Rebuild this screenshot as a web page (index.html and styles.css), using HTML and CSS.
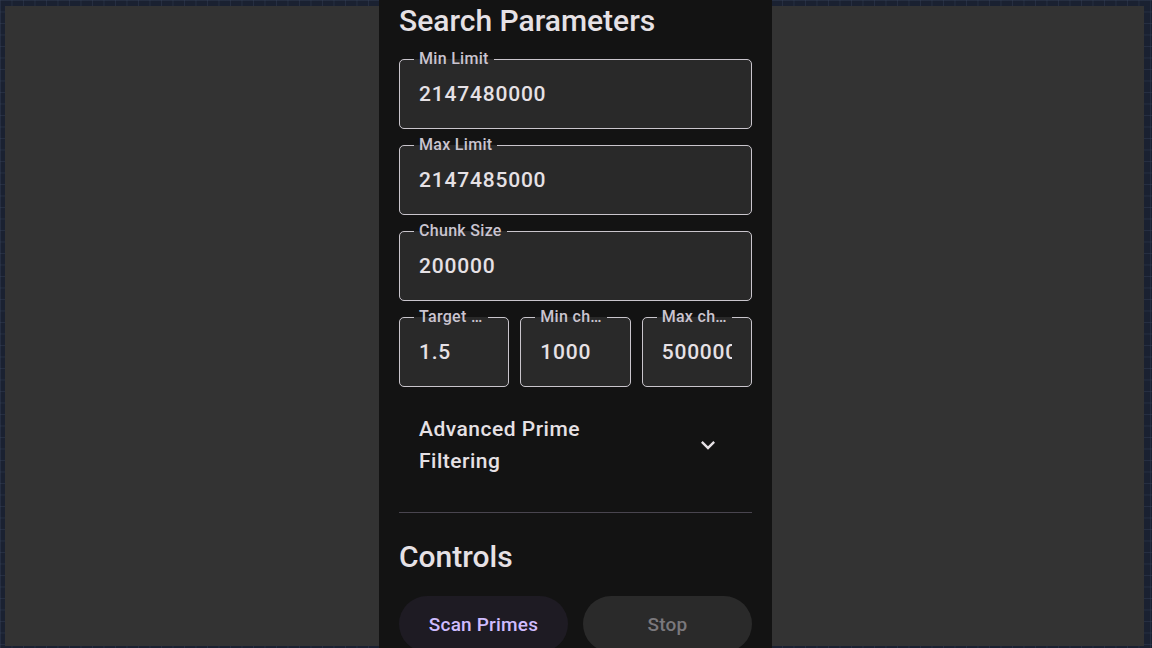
FILE: index.html
```html
<!DOCTYPE html>
<html>
<head>
<meta charset="utf-8">
<link rel="stylesheet" href="styles.css">
</head>
<body>
<div class="screen">
  <main class="panel">
    <h1 class="title">Search Parameters</h1>
    <fieldset class="field"><legend>Min Limit</legend><div class="value">2147480000</div></fieldset>
    <fieldset class="field"><legend>Max Limit</legend><div class="value">2147485000</div></fieldset>
    <fieldset class="field"><legend>Chunk Size</legend><div class="value">200000</div></fieldset>
    <div class="row">
      <fieldset class="field small"><legend>Target …</legend><div class="value">1.5</div></fieldset>
      <fieldset class="field small"><legend>Min ch…</legend><div class="value">1000</div></fieldset>
      <fieldset class="field small"><legend>Max ch…</legend><div class="value">500000</div></fieldset>
    </div>
    <div class="expander">
      <div class="exp-title">Advanced Prime Filtering</div>
      <svg class="chev" width="28" height="28" viewBox="0 0 24 24"><path d="M7.41 8.59 12 13.17l4.59-4.58L18 10l-6 6-6-6z" fill="#e6e1e5"/></svg>
    </div>
    <div class="divider"></div>
    <h2 class="title">Controls</h2>
    <div class="buttons">
      <button class="btn primary">Scan Primes</button>
      <button class="btn disabled">Stop</button>
    </div>
  </main>
</div>
</body>
</html>
```
FILE: styles.css
```css
html, body {
  margin: 0;
  height: 648px;
  overflow: hidden;
}
body {
  background-color: #1a2131;
  background-image:
    linear-gradient(to right, rgba(60,72,95,0.35) 1px, transparent 1px),
    linear-gradient(to bottom, rgba(60,72,95,0.35) 1px, transparent 1px);
  background-size: 11.5px 11.5px;
  padding: 6px 8px 2px 5px;
  box-sizing: border-box;
  font-family: Roboto, "Noto Sans", sans-serif;
}
.screen {
  height: 640px;
  background: #333333;
  display: flex;
  justify-content: center;
}
.panel {
  width: 393px;
  margin-left: 2px;
  background: #131313;
  padding: 0 20px;
  box-sizing: border-box;
  margin-top: -6px;
  height: 654px;
  overflow: hidden;
  color: #e6e1e5;
}
.title {
  font-size: 30px;
  font-weight: 500;
  line-height: 36px;
  margin: 3px 0 0;
  letter-spacing: 0;
  color: #e6e1e5;
}
h1.title { margin-bottom: 11px; }
.field {
  margin: 0 0 7px;
  border: 1px solid #c9c5cc;
  border-radius: 5px;
  background: #292929;
  padding: 0 19px;
  height: 79px;
  box-sizing: border-box;
  min-width: 0;
  overflow: hidden;
}
.field legend {
  font-size: 16px;
  font-weight: 500;
  color: #cac4d0;
  padding: 0 5px;
  margin-left: -5px;
  line-height: 18px;
  letter-spacing: 0.3px;
  white-space: nowrap;
}
.value {
  font-size: 21px;
  font-weight: 500;
  line-height: 28px;
  margin-top: 12px;
  letter-spacing: 0.8px;
  color: #e6e1e5;
  white-space: nowrap;
  overflow: hidden;
}
.row {
  display: flex;
  gap: 11px;
}
.row .field { flex: 1; }
.expander {
  display: flex;
  align-items: center;
  padding: 10px 24px 0 20px;
  height: 92px;
  box-sizing: border-box;
}
.exp-title {
  flex: 1;
  font-size: 21px;
  font-weight: 500;
  line-height: 32px;
  letter-spacing: 0.5px;
  max-width: 200px;
  margin-right: auto;
}
.chev { flex: none; margin-left: auto; margin-right: 6px; }
.divider {
  height: 1px;
  background: #49454f;
  margin: 26px 0 0;
}
h2.title { margin-top: 26px; margin-bottom: 21px; }
.buttons {
  display: flex;
  gap: 15px;
}
.btn {
  flex: 1;
  height: 56px;
  border: none;
  border-radius: 28px;
  font-family: Roboto, "Noto Sans", sans-serif;
  font-size: 19px;
  font-weight: 500;
  letter-spacing: 0.2px;
}
.primary { background: #1e1b23; color: #cfbcfe; }
.disabled { background: #2a2a2a; color: #7a787c; }
```
